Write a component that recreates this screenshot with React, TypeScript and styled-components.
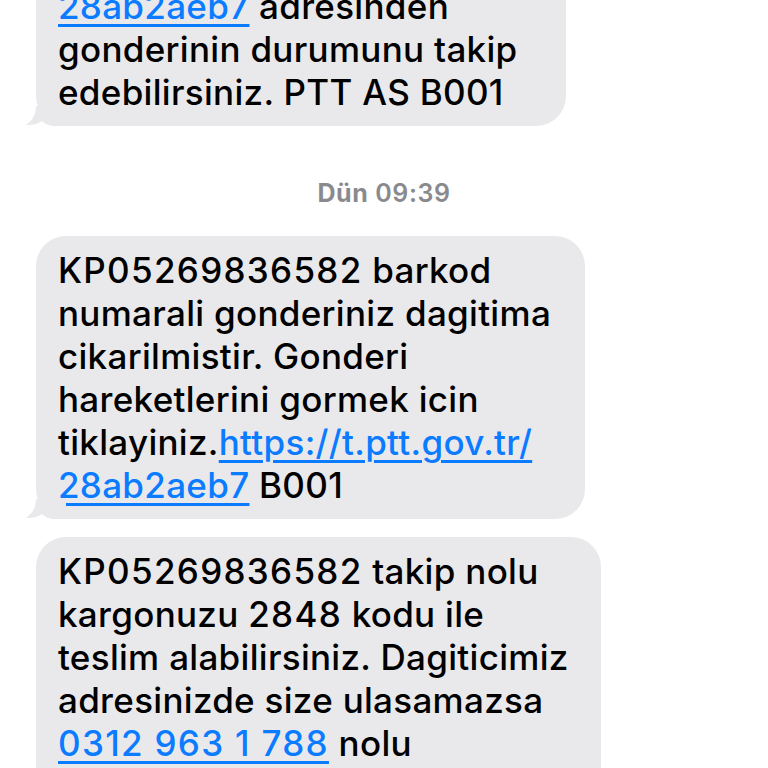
import React from "react";
import styled, { createGlobalStyle } from "styled-components";

const GlobalStyle = createGlobalStyle`
  html, body {
    margin: 0;
    padding: 0;
    background: #ffffff;
    overflow: hidden;
  }
  body {
    font-family: Inter, "Noto Sans", "Liberation Sans", sans-serif;
    -webkit-font-smoothing: antialiased;
  }
`;

const Screen = styled.div`
  width: 768px;
  height: 768px;
  overflow: hidden;
  background: #ffffff;
`;

const Thread = styled.div`
  display: flex;
  flex-direction: column;
  align-items: flex-start;
  margin-top: -114px;
`;

const Bubble = styled.div<{ $width: number; $gapTop?: number }>`
  position: relative;
  box-sizing: border-box;
  width: ${(p) => p.$width}px;
  margin-left: 36px;
  margin-top: ${(p) => p.$gapTop ?? 0}px;
  padding: 13px 20px 12px 22px;
  background: #e9e9eb;
  border-radius: 30px;
  color: #000000;
  font-size: 35px;
  line-height: 43px;
  letter-spacing: 0.3px;
  font-weight: 500;
`;

const Line = styled.span`
  display: block;
  white-space: nowrap;
`;

const Num = styled.span`
  letter-spacing: 1.3px;
`;

const Link = styled.span`
  color: #0b7bff;
  text-decoration: underline;
  text-decoration-thickness: 2.5px;
  text-underline-offset: 5px;
`;

const TailSvg = styled.svg`
  position: absolute;
  left: -10px;
  bottom: 0;
  width: 40px;
  height: 20px;
  display: block;
`;

const Timestamp = styled.div`
  align-self: stretch;
  text-align: center;
  color: #8a8a8e;
  font-size: 25px;
  line-height: 30px;
  margin: 52px 0 28px;
  letter-spacing: 0.6px;
  font-weight: 600;
`;

const Day = styled.span`
  font-weight: 700;
`;

const Time = styled.span`
  font-weight: 600;
`;

const Tail = () => (
  <TailSvg viewBox="0 0 40 20">
    <path
      d="M10 0 L40 0 L40 20 L30 20 C24 20 19 18 16 15 C12 18 6 19.5 0 19 C7 14 10 8 10 0 Z"
      fill="#e9e9eb"
    />
  </TailSvg>
);

export default function App() {
  return (
    <>
      <GlobalStyle />
      <Screen>
        <Thread>
          <Bubble $width={530}>
            <Line>
              <Num>KP05269836582</Num> barkod
            </Line>
            <Line>
              numarali gonderiniz icin <Link>https://</Link>
            </Line>
            <Line>
              <Link>28ab2aeb7</Link> adresinden
            </Line>
            <Line>gonderinin durumunu takip</Line>
            <Line>edebilirsiniz. PTT AS B001</Line>
            <Tail />
          </Bubble>

          <Timestamp>
            <Day>Dün</Day> <Time>09:39</Time>
          </Timestamp>

          <Bubble $width={549}>
            <Line>
              <Num>KP05269836582</Num> barkod
            </Line>
            <Line>numarali gonderiniz dagitima</Line>
            <Line>cikarilmistir. Gonderi</Line>
            <Line>hareketlerini gormek icin</Line>
            <Line>
              tiklayiniz.<Link>https://t.ptt.gov.tr/</Link>
            </Line>
            <Line>
              <Link>28ab2aeb7</Link> B001
            </Line>
            <Tail />
          </Bubble>

          <Bubble $width={565} $gapTop={18}>
            <Line>
              <Num>KP05269836582</Num> takip nolu
            </Line>
            <Line>
              kargonuzu <Num>2848</Num> kodu ile
            </Line>
            <Line>teslim alabilirsiniz. Dagiticimiz</Line>
            <Line>adresinizde size ulasamazsa</Line>
            <Line>
              <Link>
                <Num>0312 963 1 788</Num>
              </Link>{" "}
              nolu
            </Line>
            <Line>telefondan bize ulasabilirsiniz.</Line>
            <Line>PTT AS B001</Line>
          </Bubble>
        </Thread>
      </Screen>
    </>
  );
}
